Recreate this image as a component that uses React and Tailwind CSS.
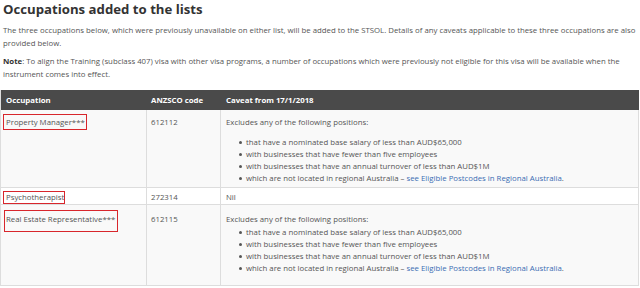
import React from 'react';

const bullets = [
    'that have a nominated base salary of less than AUD$65,000',
    'with businesses that have fewer than five employees',
    'with businesses that have an annual turnover of less than AUD$1M',
];

const Marked = ({ children, box }) => (
    <span className="relative">
        {children}
        <span className={`absolute border-[1.5px] border-[#d8262c] ${box}`} />
    </span>
);

const Dot = () => (
    <span className="shrink-0 w-[20px] flex items-center pl-[13px]">
        <span className="w-[3px] h-[3px] rounded-full bg-[#555]" />
    </span>
);

const Caveat = ({ gap }) => (
    <div>
        <p className={gap}>Excludes any of the following positions:</p>
        <ul>
            {bullets.map((b) => (
                <li key={b} className="flex leading-[12px]">
                    <Dot />
                    <span>{b}</span>
                </li>
            ))}
            <li className="flex leading-[12px]">
                <Dot />
                <span>
                    which are not located in regional Australia –{' '}
                    <a className="text-[#3a6db3]">see Eligible Postcodes in Regional Australia</a>.
                </span>
            </li>
        </ul>
    </div>
);

const App = () => {
    return (
        <div
            className="w-[640px] h-[288px] overflow-hidden bg-white text-[#555] text-[7.8px] leading-[13px]"
            style={{ fontFamily: '"Open Sans", sans-serif' }}
        >
            {/* Heading */}
            <h2 className="px-[3px] pt-[1px] text-[13.2px] leading-[17px] font-bold text-[#333]">
                Occupations added to the lists
            </h2>

            <p className="px-[3px] mt-[6px]">
                The three occupations below, which were previously unavailable on either list, will be added to the STSOL. Details of any caveats applicable to these three occupations are also provided below.
            </p>
            <p className="px-[3px] mt-[5px]">
                <b className="text-[#333]">Note</b>: To align the Training (subclass 407) visa with other visa programs, a number of occupations which were previously not eligible for this visa will be available when the instrument comes into effect.
            </p>

            {/* Table */}
            <div className="mt-[9px] w-[639px] border-l border-[#ddd]">
                <div className="grid grid-cols-[146px_74px_1fr] h-[20px] items-center bg-[#4a4a4a] text-white font-bold">
                    <div className="pl-[5px]">Occupation</div>
                    <div className="pl-[4px]">ANZSCO code</div>
                    <div className="pl-[5px]">Caveat from 17/1/2018</div>
                </div>

                <div className="grid grid-cols-[146px_74px_1fr] h-[78px] bg-[#f9f9f9] border-b border-[#ddd]">
                    <div className="pl-[5px] pt-[6px] border-r border-[#ddd]">
                        <Marked box="-left-[3px] -right-[2px] -top-[3px] -bottom-[3px]">Property Manager***</Marked>
                    </div>
                    <div className="pl-[4px] pt-[6px] border-r border-[#ddd]">612112</div>
                    <div className="pl-[5px] pt-[6px] border-r border-[#ddd]">
                        <Caveat gap="mb-[7px]" />
                    </div>
                </div>

                <div className="grid grid-cols-[146px_74px_1fr] h-[17px] bg-white border-b border-[#ddd]">
                    <div className="pl-[5px] pt-[3px] border-r border-[#ddd]">
                        <Marked box="-left-[3px] -right-[1px] -top-[1px] -bottom-[2px]">Psychotherapist</Marked>
                    </div>
                    <div className="pl-[4px] pt-[3px] border-r border-[#ddd]">272314</div>
                    <div className="pl-[5px] pt-[3px] border-r border-[#ddd]">Nil</div>
                </div>

                <div className="grid grid-cols-[146px_74px_1fr] h-[81px] bg-[#f9f9f9] border-b border-[#ddd]">
                    <div className="pl-[5px] pt-[8px] border-r border-[#ddd]">
                        <Marked box="-left-[2px] -right-[3px] -top-[4px] -bottom-[8px]">Real Estate Representative***</Marked>
                    </div>
                    <div className="pl-[4px] pt-[8px] border-r border-[#ddd]">612115</div>
                    <div className="pl-[5px] pt-[8px] border-r border-[#ddd]">
                        <Caveat gap="" />
                    </div>
                </div>
            </div>
        </div>
    );
};

export default App;
